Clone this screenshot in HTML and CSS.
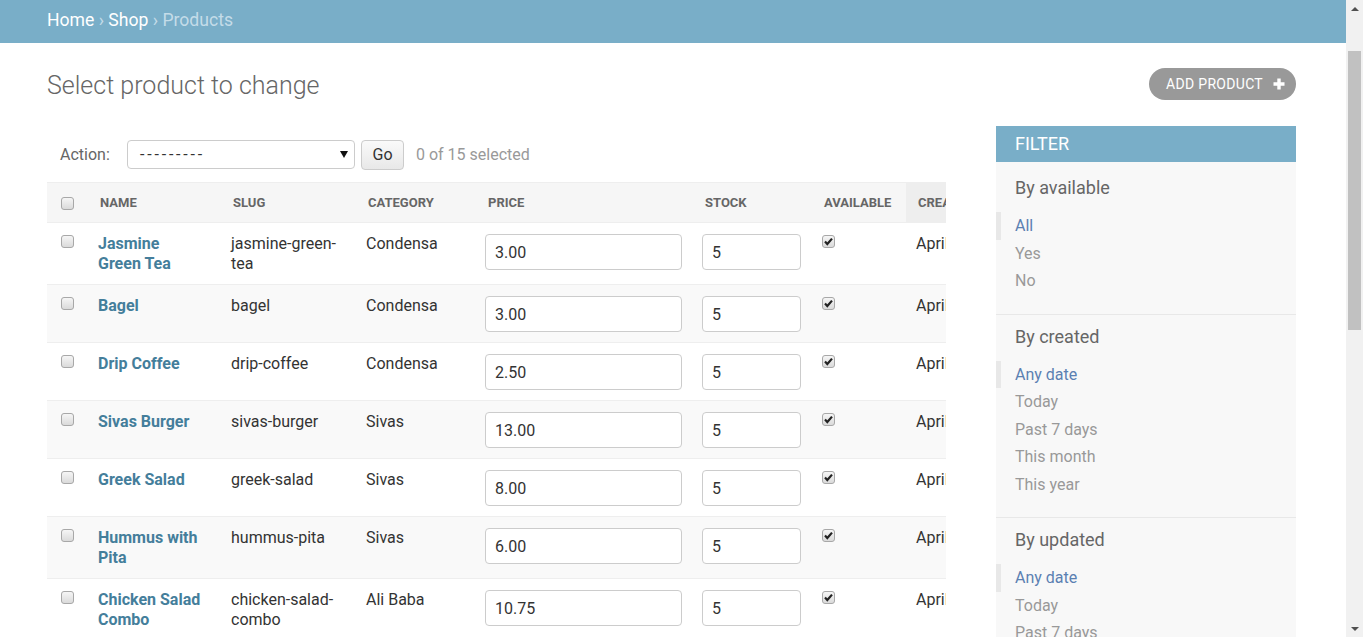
FILE: index.html
```html
<!DOCTYPE html>
<html lang="en">
<head>
<meta charset="utf-8">
<title>Select product to change</title>
<link rel="stylesheet" href="styles.css">
</head>
<body>
<div class="viewport">
  <div class="page">
    <div class="breadcrumbs"><a href="#">Home</a> › <a href="#">Shop</a> › Products</div>
    <div class="content">
      <div class="title-row">
        <h1>Select product to change</h1>
        <a class="addlink" href="#">ADD PRODUCT
          <svg width="12" height="12" viewBox="0 0 12 12"><path d="M4.3 0.5h3.4v3.8h3.8v3.4H7.7v3.8H4.3V7.7H0.5V4.3h3.8z" fill="#fff"/></svg>
        </a>
      </div>
      <div class="changelist">
        <div class="results-col">
          <div class="actions">
            <span class="action-label">Action:</span>
            <div class="select"><span class="dashes">---------</span><svg width="8" height="7" viewBox="0 0 8 7"><path d="M0 0h8L4 7z" fill="#111"/></svg></div>
            <button class="go" type="button">Go</button>
            <span class="counter">0 of 15 selected</span>
          </div>
          <div class="results">
            <table>
              <thead>
                <tr>
                  <th class="c-cb"><span class="cb"></span></th>
                  <th class="c-name">Name</th>
                  <th class="c-slug">Slug</th>
                  <th class="c-cat">Category</th>
                  <th class="c-price">Price</th>
                  <th class="c-stock">Stock</th>
                  <th class="c-avail">Available</th>
                  <th class="c-created sorted">Created</th>
                </tr>
              </thead>
              <tbody>
                <tr>
                  <td class="c-cb"><span class="cb"></span></td>
                  <td class="c-name"><a href="#">Jasmine Green Tea</a></td>
                  <td class="c-slug">jasmine-green-tea</td>
                  <td class="c-cat">Condensa</td>
                  <td class="c-price"><input class="field price" type="text" value="3.00"></td>
                  <td class="c-stock"><input class="field stock" type="text" value="5"></td>
                  <td class="c-avail"><span class="cb checked"><svg width="11" height="11" viewBox="0 0 11 11"><path d="M2 5.6l2.3 2.4L9 2.6" fill="none" stroke="#222" stroke-width="2.2"/></svg></span></td>
                  <td class="c-created">April 3, 2018, 10:12 a.m.</td>
                </tr>
                <tr>
                  <td class="c-cb"><span class="cb"></span></td>
                  <td class="c-name"><a href="#">Bagel</a></td>
                  <td class="c-slug">bagel</td>
                  <td class="c-cat">Condensa</td>
                  <td class="c-price"><input class="field price" type="text" value="3.00"></td>
                  <td class="c-stock"><input class="field stock" type="text" value="5"></td>
                  <td class="c-avail"><span class="cb checked"><svg width="11" height="11" viewBox="0 0 11 11"><path d="M2 5.6l2.3 2.4L9 2.6" fill="none" stroke="#222" stroke-width="2.2"/></svg></span></td>
                  <td class="c-created">April 3, 2018, 10:12 a.m.</td>
                </tr>
                <tr>
                  <td class="c-cb"><span class="cb"></span></td>
                  <td class="c-name"><a href="#">Drip Coffee</a></td>
                  <td class="c-slug">drip-coffee</td>
                  <td class="c-cat">Condensa</td>
                  <td class="c-price"><input class="field price" type="text" value="2.50"></td>
                  <td class="c-stock"><input class="field stock" type="text" value="5"></td>
                  <td class="c-avail"><span class="cb checked"><svg width="11" height="11" viewBox="0 0 11 11"><path d="M2 5.6l2.3 2.4L9 2.6" fill="none" stroke="#222" stroke-width="2.2"/></svg></span></td>
                  <td class="c-created">April 3, 2018, 10:12 a.m.</td>
                </tr>
                <tr>
                  <td class="c-cb"><span class="cb"></span></td>
                  <td class="c-name"><a href="#">Sivas Burger</a></td>
                  <td class="c-slug">sivas-burger</td>
                  <td class="c-cat">Sivas</td>
                  <td class="c-price"><input class="field price" type="text" value="13.00"></td>
                  <td class="c-stock"><input class="field stock" type="text" value="5"></td>
                  <td class="c-avail"><span class="cb checked"><svg width="11" height="11" viewBox="0 0 11 11"><path d="M2 5.6l2.3 2.4L9 2.6" fill="none" stroke="#222" stroke-width="2.2"/></svg></span></td>
                  <td class="c-created">April 3, 2018, 10:12 a.m.</td>
                </tr>
                <tr>
                  <td class="c-cb"><span class="cb"></span></td>
                  <td class="c-name"><a href="#">Greek Salad</a></td>
                  <td class="c-slug">greek-salad</td>
                  <td class="c-cat">Sivas</td>
                  <td class="c-price"><input class="field price" type="text" value="8.00"></td>
                  <td class="c-stock"><input class="field stock" type="text" value="5"></td>
                  <td class="c-avail"><span class="cb checked"><svg width="11" height="11" viewBox="0 0 11 11"><path d="M2 5.6l2.3 2.4L9 2.6" fill="none" stroke="#222" stroke-width="2.2"/></svg></span></td>
                  <td class="c-created">April 3, 2018, 10:12 a.m.</td>
                </tr>
                <tr>
                  <td class="c-cb"><span class="cb"></span></td>
                  <td class="c-name"><a href="#">Hummus with Pita</a></td>
                  <td class="c-slug">hummus-pita</td>
                  <td class="c-cat">Sivas</td>
                  <td class="c-price"><input class="field price" type="text" value="6.00"></td>
                  <td class="c-stock"><input class="field stock" type="text" value="5"></td>
                  <td class="c-avail"><span class="cb checked"><svg width="11" height="11" viewBox="0 0 11 11"><path d="M2 5.6l2.3 2.4L9 2.6" fill="none" stroke="#222" stroke-width="2.2"/></svg></span></td>
                  <td class="c-created">April 3, 2018, 10:12 a.m.</td>
                </tr>
                <tr>
                  <td class="c-cb"><span class="cb"></span></td>
                  <td class="c-name"><a href="#">Chicken Salad Combo</a></td>
                  <td class="c-slug">chicken-salad-combo</td>
                  <td class="c-cat">Ali Baba</td>
                  <td class="c-price"><input class="field price" type="text" value="10.75"></td>
                  <td class="c-stock"><input class="field stock" type="text" value="5"></td>
                  <td class="c-avail"><span class="cb checked"><svg width="11" height="11" viewBox="0 0 11 11"><path d="M2 5.6l2.3 2.4L9 2.6" fill="none" stroke="#222" stroke-width="2.2"/></svg></span></td>
                  <td class="c-created">April 3, 2018, 10:12 a.m.</td>
                </tr>
                <tr>
                  <td class="c-cb"><span class="cb"></span></td>
                  <td class="c-name"><a href="#">Falafel Wrap</a></td>
                  <td class="c-slug">falafel-wrap</td>
                  <td class="c-cat">Ali Baba</td>
                  <td class="c-price"><input class="field price" type="text" value="7.50"></td>
                  <td class="c-stock"><input class="field stock" type="text" value="5"></td>
                  <td class="c-avail"><span class="cb checked"><svg width="11" height="11" viewBox="0 0 11 11"><path d="M2 5.6l2.3 2.4L9 2.6" fill="none" stroke="#222" stroke-width="2.2"/></svg></span></td>
                  <td class="c-created">April 3, 2018, 10:12 a.m.</td>
                </tr>
              </tbody>
            </table>
          </div>
        </div>
        <aside class="filter">
          <h2>Filter</h2>
          <div class="filter-body">
            <div class="filter-section">
              <h3>By available</h3>
              <ul>
                <li class="selected"><a href="#">All</a></li>
                <li><a href="#">Yes</a></li>
                <li><a href="#">No</a></li>
              </ul>
            </div>
            <div class="filter-section">
              <h3>By created</h3>
              <ul>
                <li class="selected"><a href="#">Any date</a></li>
                <li><a href="#">Today</a></li>
                <li><a href="#">Past 7 days</a></li>
                <li><a href="#">This month</a></li>
                <li><a href="#">This year</a></li>
              </ul>
            </div>
            <div class="filter-section">
              <h3>By updated</h3>
              <ul>
                <li class="selected"><a href="#">Any date</a></li>
                <li><a href="#">Today</a></li>
                <li><a href="#">Past 7 days</a></li>
                <li><a href="#">This month</a></li>
                <li><a href="#">This year</a></li>
              </ul>
            </div>
          </div>
        </aside>
      </div>
    </div>
  </div>
  <div class="scrollbar">
    <div class="sb-arrow"><svg width="8" height="4" viewBox="0 0 8 4"><path d="M0 4L4 0L8 4z" fill="#505050"/></svg></div>
    <div class="sb-thumb"></div>
    <div class="sb-space"></div>
    <div class="sb-arrow"><svg width="8" height="4" viewBox="0 0 8 4"><path d="M0 0L8 0L4 4z" fill="#505050"/></svg></div>
  </div>
</div>
</body>
</html>
```

FILE: styles.css
```css
html, body {
  margin: 0;
  padding: 0;
}

body {
  font-family: Roboto, "Liberation Sans", sans-serif;
  color: #333;
  background: #fff;
}

a {
  text-decoration: none;
}

.viewport {
  display: flex;
  height: 637px;
  overflow: hidden;
}

.page {
  flex: 1;
  min-width: 0;
  overflow: hidden;
}

/* breadcrumbs */
.breadcrumbs {
  background: #79aec8;
  color: #c4dce8;
  font-size: 17.6px;
  line-height: 22px;
  padding: 9px 47px 12px;
}

.breadcrumbs a {
  color: #fff;
}

.content {
  padding: 25px 50px 0 47px;
}

.title-row {
  display: flex;
  justify-content: space-between;
  align-items: center;
  height: 32px;
}

h1 {
  margin: 0;
  padding-top: 4px;
  font-size: 25px;
  font-weight: 300;
  line-height: 30px;
  color: #666;
}

.addlink {
  display: flex;
  align-items: center;
  gap: 10px;
  height: 32px;
  box-sizing: border-box;
  padding: 0 11px 0 17px;
  border-radius: 16px;
  background: #999;
  color: #fff;
  font-size: 14px;
  letter-spacing: 0.3px;
}

.changelist {
  display: flex;
  align-items: flex-start;
  gap: 50px;
  margin-top: 26px;
}

.results-col {
  flex: 1;
  min-width: 0;
}

/* actions */
.actions {
  display: flex;
  align-items: center;
  height: 29px;
  padding: 14px 13px 13px;
  font-size: 16px;
  color: #666;
}

.action-label {
  width: 67px;
}

.select {
  display: flex;
  justify-content: space-between;
  align-items: center;
  width: 228px;
  height: 29px;
  box-sizing: border-box;
  padding: 0 6px 0 12px;
  border: 1px solid #ccc;
  border-radius: 4px;
  color: #333;
  font-size: 16px;
  background: #fff;
}

.dashes {
  letter-spacing: 2.8px;
}

.go {
  margin-left: 6px;
  height: 30px;
  width: 43px;
  padding: 0;
  border: 1px solid #ccc;
  border-radius: 4px;
  background: linear-gradient(#fafafa, #e8e8e8);
  font-family: Roboto, "Liberation Sans", sans-serif;
  font-size: 16px;
  color: #333;
}

.counter {
  margin-left: 12px;
  color: #999;
}

/* results table */
.results {
  overflow: hidden;
}

table {
  border-collapse: collapse;
  table-layout: fixed;
  width: 1117px;
}

th, td {
  box-sizing: border-box;
}

th {
  text-align: left;
  font-size: 13px;
  font-weight: 700;
  text-transform: uppercase;
  color: #666;
  background: #f6f6f6;
  line-height: 16px;
  padding: 12px 8px 11px 11px;
  border-top: 1px solid #eee;
  border-bottom: 1px solid #eee;
  white-space: nowrap;
  vertical-align: middle;
}

th.sorted {
  background: #eee;
  padding-left: 12px;
}

td {
  padding: 11px 8px 10px 9px;
  font-size: 16px;
  line-height: 20px;
  vertical-align: top;
  border-bottom: 1px solid #eee;
  color: #333;
}

tbody tr:nth-child(even) td {
  background: #f9f9f9;
}

.c-cb { width: 42px; }
th.c-cb, td.c-cb { padding-left: 14px; }
.c-name { width: 133px; }
td.c-name { padding-right: 19px; }
.c-slug { width: 135px; }
.c-cat { width: 120px; }
.c-price { width: 217px; }
.c-stock { width: 119px; }
.c-avail { width: 93px; }
.c-created { width: 258px; white-space: nowrap; }
td.c-price { padding-left: 8px; }
td.c-stock { padding-left: 8px; }
td.c-avail { padding-left: 9px; }
td.c-created { padding-left: 10px; }

td.c-name a {
  color: #447e9b;
  font-weight: 700;
}

.cb {
  display: flex;
  align-items: center;
  justify-content: center;
  width: 13px;
  height: 13px;
  box-sizing: border-box;
  border: 1px solid #a8a8a8;
  border-radius: 3px;
  background: linear-gradient(#f6f6f6, #dadada);
}

td .cb {
  margin-top: 1px;
}

.field {
  display: block;
  height: 36px;
  box-sizing: border-box;
  border: 1px solid #ccc;
  border-radius: 4px;
  padding: 0 9px;
  font-family: Roboto, "Liberation Sans", sans-serif;
  font-size: 16px;
  color: #333;
  background: #fff;
}

.field.price { width: 197px; }
.field.stock { width: 99px; }

/* filter */
.filter {
  flex: none;
  width: 300px;
  background: #f8f8f8;
}

.filter h2 {
  margin: 0;
  background: #79aec8;
  color: #fff;
  font-size: 18px;
  font-weight: 400;
  line-height: 22px;
  padding: 7px 19px;
  text-transform: uppercase;
}

.filter-body {
  padding-top: 4px;
}

.filter-section + .filter-section {
  border-top: 1px solid #e8e8e8;
}

.filter h3 {
  margin: 0;
  padding: 11px 19px 0;
  font-size: 18px;
  font-weight: 400;
  line-height: 22px;
  color: #666;
}

.filter ul {
  list-style: none;
  margin: 13px 0 0;
  padding: 0 0 19px;
}

.filter li {
  font-size: 16px;
  line-height: 27.5px;
  padding-left: 19px;
}

.filter li a {
  color: #999;
}

.filter li.selected {
  border-left: 5px solid #e8e8e8;
  padding-left: 14px;
}

.filter li.selected a {
  color: #5b80b2;
}

/* scrollbar */
.scrollbar {
  flex: none;
  width: 17px;
  background: #f1f1f1;
  display: flex;
  flex-direction: column;
  align-items: center;
}

.sb-arrow {
  height: 17px;
  width: 17px;
  display: flex;
  align-items: center;
  justify-content: center;
}

.sb-thumb {
  width: 13px;
  height: 279px;
  margin-top: 34px;
  background: #c1c1c1;
}

.sb-space {
  flex: 1;
}
```
